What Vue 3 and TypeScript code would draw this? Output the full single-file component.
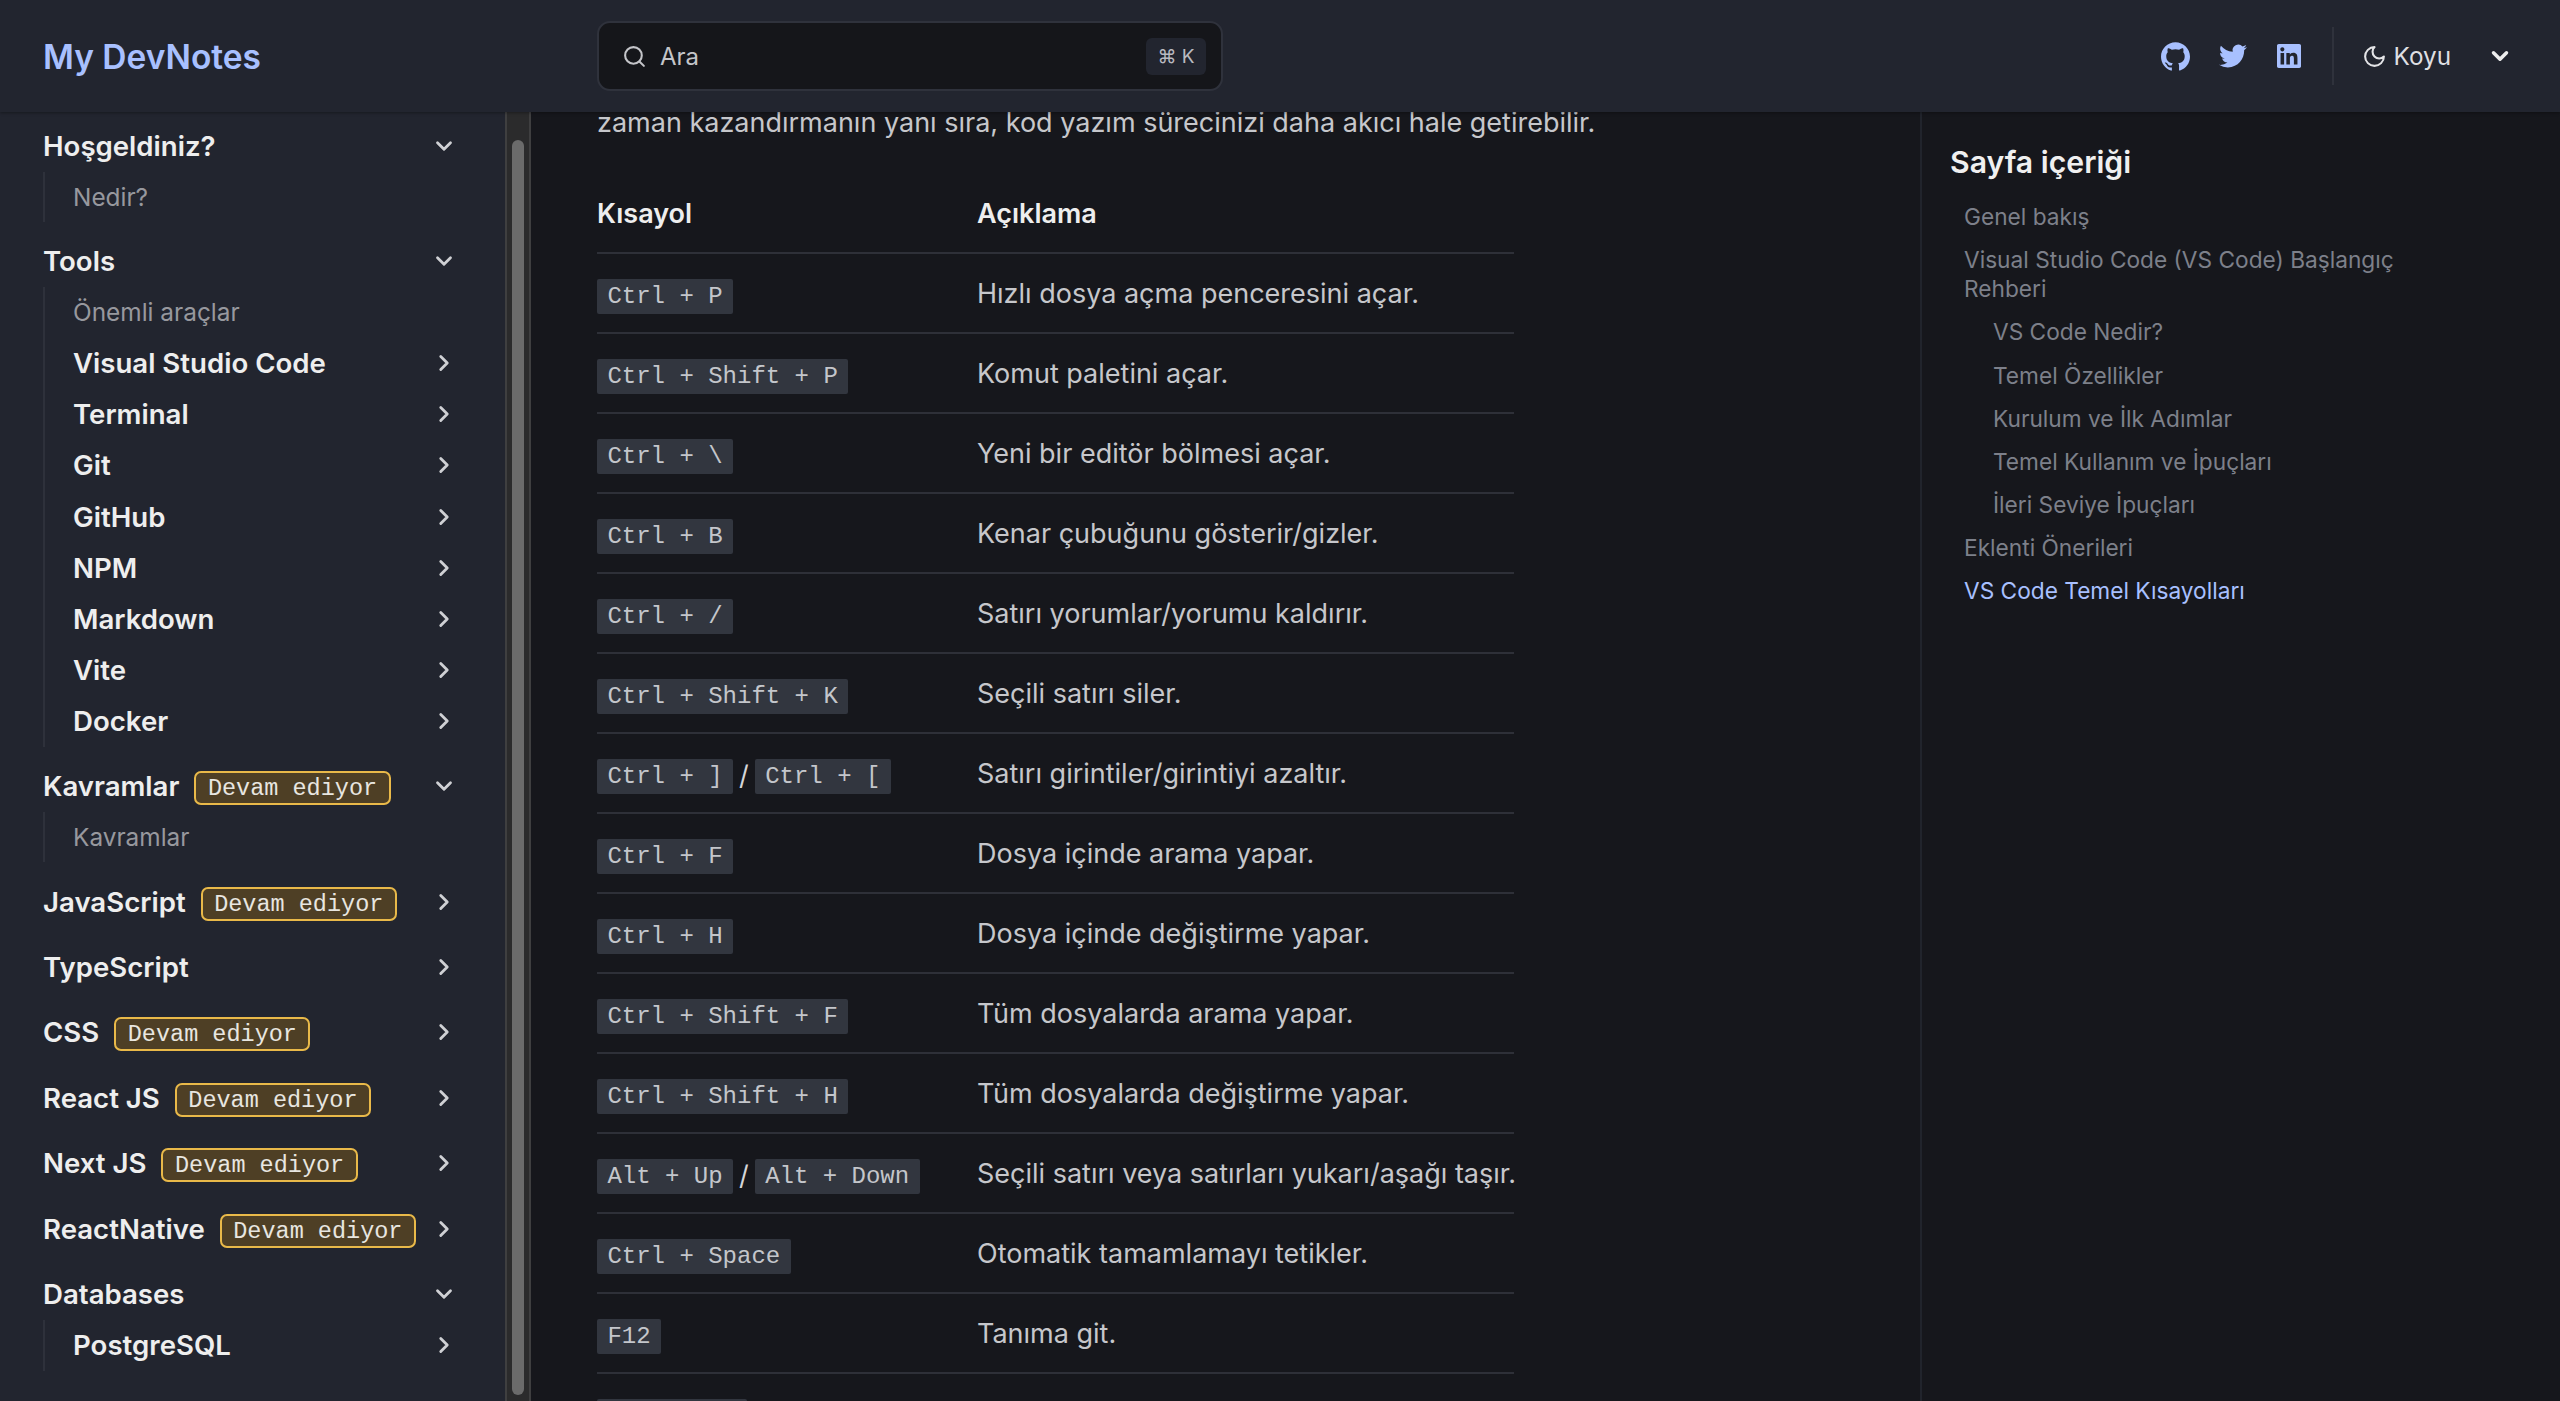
<script setup lang="ts">
interface Sub { label: string; chevron?: boolean }
interface Section { label: string; badge?: boolean; open?: boolean; subs?: Sub[] }
const sections: Section[] = [
  { label: 'Hoşgeldiniz?', open: true, subs: [{ label: 'Nedir?' }] },
  { label: 'Tools', open: true, subs: [
    { label: 'Önemli araçlar' },
    { label: 'Visual Studio Code', chevron: true },
    { label: 'Terminal', chevron: true },
    { label: 'Git', chevron: true },
    { label: 'GitHub', chevron: true },
    { label: 'NPM', chevron: true },
    { label: 'Markdown', chevron: true },
    { label: 'Vite', chevron: true },
    { label: 'Docker', chevron: true },
  ] },
  { label: 'Kavramlar', badge: true, open: true, subs: [{ label: 'Kavramlar' }] },
  { label: 'JavaScript', badge: true },
  { label: 'TypeScript' },
  { label: 'CSS', badge: true },
  { label: 'React JS', badge: true },
  { label: 'Next JS', badge: true },
  { label: 'ReactNative', badge: true },
  { label: 'Databases', open: true, subs: [{ label: 'PostgreSQL', chevron: true }] },
]
const rows: { keys: string[]; desc: string }[] = [
  { keys: ['Ctrl + P'], desc: 'Hızlı dosya açma penceresini açar.' },
  { keys: ['Ctrl + Shift + P'], desc: 'Komut paletini açar.' },
  { keys: ['Ctrl + \\'], desc: 'Yeni bir editör bölmesi açar.' },
  { keys: ['Ctrl + B'], desc: 'Kenar çubuğunu gösterir/gizler.' },
  { keys: ['Ctrl + /'], desc: 'Satırı yorumlar/yorumu kaldırır.' },
  { keys: ['Ctrl + Shift + K'], desc: 'Seçili satırı siler.' },
  { keys: ['Ctrl + ]', 'Ctrl + ['], desc: 'Satırı girintiler/girintiyi azaltır.' },
  { keys: ['Ctrl + F'], desc: 'Dosya içinde arama yapar.' },
  { keys: ['Ctrl + H'], desc: 'Dosya içinde değiştirme yapar.' },
  { keys: ['Ctrl + Shift + F'], desc: 'Tüm dosyalarda arama yapar.' },
  { keys: ['Ctrl + Shift + H'], desc: 'Tüm dosyalarda değiştirme yapar.' },
  { keys: ['Alt + Up', 'Alt + Down'], desc: 'Seçili satırı veya satırları yukarı/aşağı taşır.' },
  { keys: ['Ctrl + Space'], desc: 'Otomatik tamamlamayı tetikler.' },
  { keys: ['F12'], desc: 'Tanıma git.' },
]
const toc: { label: string; level: number; active?: boolean }[] = [
  { label: 'Genel bakış', level: 1 },
  { label: 'Visual Studio Code (VS Code) Başlangıç Rehberi', level: 1 },
  { label: 'VS Code Nedir?', level: 2 },
  { label: 'Temel Özellikler', level: 2 },
  { label: 'Kurulum ve İlk Adımlar', level: 2 },
  { label: 'Temel Kullanım ve İpuçları', level: 2 },
  { label: 'İleri Seviye İpuçları', level: 2 },
  { label: 'Eklenti Önerileri', level: 1 },
  { label: 'VS Code Temel Kısayolları', level: 1, active: true },
]
</script>

<template>
  <div class="page">
    <header class="topbar">
      <div class="brand">My DevNotes</div>
      <div class="search">
        <svg class="search-icon" viewBox="0 0 24 24" fill="none" stroke="currentColor" stroke-width="2" stroke-linecap="round" stroke-linejoin="round"><circle cx="11" cy="11" r="8" /><path d="m21 21-4.3-4.3" /></svg>
        <span class="search-text">Ara</span>
        <kbd class="search-kbd">⌘ K</kbd>
      </div>
      <div class="top-right">
        <svg class="social gh" viewBox="0 0 24 24" fill="currentColor"><path d="M12 .297c-6.63 0-12 5.373-12 12 0 5.303 3.438 9.8 8.205 11.385.6.113.82-.258.82-.577 0-.285-.01-1.04-.015-2.04-3.338.724-4.042-1.61-4.042-1.61C4.422 18.07 3.633 17.7 3.633 17.7c-1.087-.744.084-.729.084-.729 1.205.084 1.838 1.236 1.838 1.236 1.07 1.835 2.809 1.305 3.495.998.108-.776.417-1.305.76-1.605-2.665-.3-5.466-1.332-5.466-5.93 0-1.31.465-2.38 1.235-3.22-.135-.303-.54-1.523.105-3.176 0 0 1.005-.322 3.3 1.23.96-.267 1.98-.399 3-.405 1.02.006 2.04.138 3 .405 2.28-1.552 3.285-1.23 3.285-1.23.645 1.653.24 2.873.12 3.176.765.84 1.23 1.91 1.23 3.22 0 4.61-2.805 5.625-5.475 5.92.42.36.81 1.096.81 2.22 0 1.606-.015 2.896-.015 3.286 0 .315.21.69.825.57C20.565 22.092 24 17.592 24 12.297c0-6.627-5.373-12-12-12" /></svg>
        <svg class="social tw" viewBox="0 0 24 24" fill="currentColor"><path d="M23.953 4.57a10 10 0 01-2.825.775 4.958 4.958 0 002.163-2.723c-.951.555-2.005.959-3.127 1.184a4.92 4.92 0 00-8.384 4.482C7.69 8.095 4.067 6.13 1.64 3.162a4.822 4.822 0 00-.666 2.475c0 1.71.87 3.213 2.188 4.096a4.904 4.904 0 01-2.228-.616v.06a4.923 4.923 0 003.946 4.827 4.996 4.996 0 01-2.212.085 4.936 4.936 0 004.604 3.417 9.867 9.867 0 01-6.102 2.105c-.39 0-.779-.023-1.17-.067a13.995 13.995 0 007.557 2.209c9.053 0 13.998-7.496 13.998-13.985 0-.21 0-.42-.015-.63A9.935 9.935 0 0024 4.59z" /></svg>
        <svg class="social li" viewBox="0 0 24 24" fill="currentColor"><path d="M20.447 20.452h-3.554v-5.569c0-1.328-.027-3.037-1.852-3.037-1.853 0-2.136 1.445-2.136 2.939v5.667H9.351V9h3.414v1.561h.046c.477-.9 1.637-1.85 3.37-1.85 3.601 0 4.267 2.37 4.267 5.455v6.286zM5.337 7.433c-1.144 0-2.063-.926-2.063-2.065 0-1.138.92-2.063 2.063-2.063 1.14 0 2.064.925 2.064 2.063 0 1.139-.925 2.065-2.064 2.065zm1.782 13.019H3.555V9h3.564v11.452zM22.225 0H1.771C.792 0 0 .774 0 1.729v20.542C0 23.227.792 24 1.771 24h20.451C23.2 24 24 23.227 24 22.271V1.729C24 .774 23.2 0 22.222 0h.003z" /></svg>
        <span class="divider"></span>
        <svg class="moon" viewBox="0 0 24 24" fill="none" stroke="currentColor" stroke-width="2" stroke-linecap="round" stroke-linejoin="round"><path d="M12 3a6 6 0 0 0 9 9 9 9 0 1 1-9-9Z" /></svg>
        <span class="theme">Koyu</span>
        <svg class="theme-chev" viewBox="0 0 24 24" fill="none" stroke="currentColor" stroke-width="3.2" stroke-linecap="round" stroke-linejoin="round"><path d="m6 9 6 6 6-6" /></svg>
      </div>
    </header>

    <div class="body">
      <aside class="sidebar">
        <nav class="nav">
          <section v-for="s in sections" :key="s.label" class="sec" :class="{ open: s.open }">
            <div class="row">
              <span class="row-label">{{ s.label }}</span>
              <span v-if="s.badge" class="badge">Devam ediyor</span>
              <svg class="chev" :class="{ down: s.open }" viewBox="0 0 24 24" fill="none" stroke="currentColor" stroke-width="2.6" stroke-linecap="round" stroke-linejoin="round"><path d="m9 6 6 6-6 6" /></svg>
            </div>
            <ul v-if="s.subs" class="subs">
              <li v-for="i in s.subs" :key="i.label" class="sub" :class="{ strong: i.chevron }">
                <span>{{ i.label }}</span>
                <svg v-if="i.chevron" class="chev" viewBox="0 0 24 24" fill="none" stroke="currentColor" stroke-width="2.6" stroke-linecap="round" stroke-linejoin="round"><path d="m9 6 6 6-6 6" /></svg>
              </li>
            </ul>
          </section>
        </nav>
        <div class="track"><div class="thumb"></div></div>
      </aside>

      <main class="main">
        <p class="intro">zaman kazandırmanın yanı sıra, kod yazım sürecinizi daha akıcı hale getirebilir.</p>
        <div class="table">
          <div class="tr head">
            <div>Kısayol</div>
            <div>Açıklama</div>
          </div>
          <div v-for="r in rows" :key="r.desc" class="tr">
            <div class="keys">
              <template v-for="(k, idx) in r.keys" :key="k">
                <span v-if="idx > 0" class="sep">/</span>
                <code class="code">{{ k }}</code>
              </template>
            </div>
            <div class="desc">{{ r.desc }}</div>
          </div>
          <div class="tr">
            <div class="keys"><span class="code code-clipped"></span></div>
          </div>
        </div>
      </main>

      <aside class="toc">
        <h2 class="toc-title">Sayfa içeriği</h2>
        <a v-for="t in toc" :key="t.label" class="toc-item" :class="{ nested: t.level === 2, active: t.active }">{{ t.label }}</a>
      </aside>
    </div>
  </div>
</template>

<style>
html, body { margin: 0; background: #16171c; }
</style>

<style scoped>
.page {
  width: 2560px;
  height: 1401px;
  overflow: hidden;
  display: flex;
  flex-direction: column;
  background: #16171c;
  font-family: Inter, "Noto Sans", sans-serif;
  color: #c6c7cb;
}
.topbar {
  flex: none;
  height: 112px;
  display: flex;
  align-items: center;
  background: #22252f;
  box-shadow: 0 1px 3px rgba(0, 0, 0, 0.35);
  position: relative;
  z-index: 2;
}
.brand {
  width: 597px;
  box-sizing: border-box;
  padding: 1px 0 0 43px;
  font-size: 33.5px;
  font-weight: 600;
  color: #a8c0ff;
}
.search {
  width: 626px;
  height: 70px;
  box-sizing: border-box;
  border: 2px solid #2f323c;
  border-radius: 13px;
  background: #15161a;
  display: flex;
  align-items: center;
  padding: 0 15px 0 23px;
  color: #c4c5c9;
}
.search-icon { width: 25px; height: 25px; flex: none; }
.search-text { margin-left: 13px; font-size: 24px; flex: 1; }
.search-kbd {
  width: 60px;
  height: 37px;
  border-radius: 6px;
  background: #22252f;
  font-family: Inter, sans-serif;
  font-size: 19px;
  display: flex;
  align-items: center;
  justify-content: center;
  color: #b9bac0;
}
.top-right {
  flex: 1;
  display: flex;
  align-items: center;
  justify-content: flex-end;
  padding-right: 47.4px;
  color: #a8c0ff;
}
.social { display: block; flex: none; }
.gh { width: 29px; height: 29px; margin-right: 29px; }
.tw { width: 28px; height: 28px; margin-right: 30px; }
.li { width: 24px; height: 24px; margin-right: 31px; }
.divider { width: 2px; height: 58px; background: #2f323c; margin-right: 27.5px; }
.moon { width: 25px; height: 25px; color: #e4e4e7; margin-right: 7px; }
.theme { font-size: 24.3px; color: #dedfe2; width: 93.1px; }
.theme-chev { width: 26px; height: 26px; color: #eeeeee; }

.body { flex: 1; display: flex; min-height: 0; }
.sidebar {
  flex: none;
  width: 531px;
  box-sizing: border-box;
  display: flex;
  background: #22252f;
  overflow: hidden;
}
.nav { width: 505px; flex: none; box-sizing: border-box; padding: 8.5px 49px 0 43px; }
.sec { margin-bottom: 14.2px; }
.sec.open { margin-bottom: 13.8px; }
.row {
  height: 51.2px;
  display: flex;
  align-items: center;
  font-size: 27.6px;
  font-weight: 600;
  color: #eeeeee;
  white-space: nowrap;
}
.badge {
  margin: 4px 0 0 15px;
  height: 34px;
  box-sizing: border-box;
  padding: 0 11.5px;
  border: 2px solid #e9b949;
  border-radius: 7px;
  background: #4e3f25;
  font-family: "Liberation Mono", monospace;
  font-size: 23.5px;
  font-weight: 400;
  line-height: 32px;
  color: #e8e6e0;
}
.chev {
  width: 26px;
  height: 26px;
  margin-left: auto;
  flex: none;
  color: #cfd0d4;
  position: relative;
  left: 1px;
}
.chev.down { transform: rotate(90deg); }
.subs {
  list-style: none;
  margin: 0;
  padding: 0 0 0 28px;
  border-left: 2px solid #2e313b;
}
.sub {
  height: 50.4px;
  display: flex;
  align-items: center;
  font-size: 24.4px;
  color: #97989e;
}
.sub.strong { height: 51.2px; font-size: 27.6px; font-weight: 600; color: #eeeeee; }
.track {
  width: 26px;
  flex: none;
  box-sizing: border-box;
  background: #2b2b2c;
  border-left: 2px solid #3f3f40;
  border-right: 2px solid #3f3f40;
  padding: 28px 5px 0 5px;
}
.thumb { height: 1255px; border-radius: 7px; background: #6b6b6b; }

.main { flex: none; width: 1389px; box-sizing: border-box; padding-left: 66px; overflow: hidden; }
.intro { margin: -6.5px 0 0; font-size: 27px; line-height: 34px; color: #c6c7cb; white-space: nowrap; }
.table { width: 917px; margin-top: 35.4px; }
.tr {
  height: 80px;
  box-sizing: border-box;
  display: grid;
  grid-template-columns: 380px 1fr;
  align-items: center;
  border-bottom: 2px solid #2e3038;
  font-size: 27px;
  white-space: nowrap;
}
.head { font-weight: 600; color: #eeeeee; height: 79px; padding-top: 1px; }
.keys { display: flex; align-items: center; padding-top: 7px; }
.sep { margin: 0 6px; font-size: 27px; color: #d4d5d8; line-height: 30px; }
.code {
  height: 35px;
  box-sizing: border-box;
  padding: 0 10.4px;
  background: #32363f;
  border-radius: 2px;
  font-family: "Liberation Mono", monospace;
  font-size: 24px;
  line-height: 35px;
  color: #c4c6cb;
}
.code-clipped { width: 150px; }
.desc { color: #c6c7cb; padding-top: 2px; }

.toc {
  flex: 1;
  border-left: 2px solid #21242c;
  box-sizing: border-box;
  padding: 31.5px 0 0 28px;
  display: flex;
  flex-direction: column;
}
.toc-title { margin: 0 0 16.5px; font-size: 30.2px; font-weight: 600; color: #f0f0f0; line-height: 36px; }
.toc-item {
  display: block;
  width: 450px;
  padding: 7.2px 0 7.2px 14px;
  font-size: 22.7px;
  line-height: 28.8px;
  color: #7d808a;
}
.toc-item.nested { padding-left: 43px; width: 421px; }
.toc-item.active { color: #a8c0ff; }
</style>
